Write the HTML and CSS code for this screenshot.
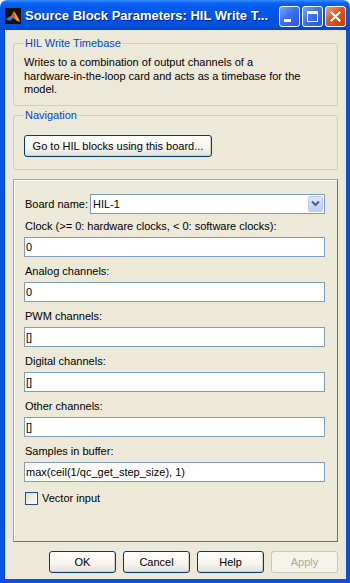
FILE: index.html
```html
<!DOCTYPE html>
<html lang="en">

<head>
    <meta charset="UTF-8">
    <meta name="viewport" content="width=device-width, initial-scale=1.0">
    <title>Source Block Parameters: HIL Write Timebase</title>
    <link rel="stylesheet" href="styles.css">
</head>

<body>

    <div class="window">
        <div class="titlebar">
            <svg class="app-icon" width="16" height="16" viewBox="0 0 16 16">
                <rect width="16" height="16" fill="#101010"/>
                <polygon points="1,11 6,8 9,3 12,8 15,14 11,12 8,10" fill="#e8591c"/>
                <polygon points="9,3 12,8 15,14 11,12" fill="#f7a132"/>
                <polygon points="1,11 6,8 8,10 5,13" fill="#2f7fd0"/>
            </svg>
            <span class="title">Source Block Parameters: HIL Write T...</span>
            <div class="caption-buttons">
                <span class="cap-btn"><span class="min-bar"></span></span>
                <span class="cap-btn"><span class="max-box"></span></span>
                <span class="cap-btn close">
                    <svg width="11" height="11" viewBox="0 0 11 11">
                        <path d="M1.5 1.5 L9.5 9.5 M9.5 1.5 L1.5 9.5" stroke="#fff" stroke-width="2.2" stroke-linecap="square"/>
                    </svg>
                </span>
            </div>
        </div>

        <div class="client">
            <fieldset class="group desc-group">
                <legend>HIL Write Timebase</legend>
                <p class="desc">Writes to a combination of output channels of a<br>hardware-in-the-loop card and acts as a timebase for the<br>model.</p>
            </fieldset>

            <fieldset class="group nav-group">
                <legend>Navigation</legend>
                <button class="btn nav-btn">Go to HIL blocks using this board...</button>
            </fieldset>

            <div class="params">
                <div class="board-row">
                    <span>Board name:</span>
                    <div class="select">
                        <span>HIL-1</span>
                        <span class="drop">
                            <svg width="9" height="7" viewBox="0 0 9 7">
                                <path d="M1 1.5 L4.5 5 L8 1.5" stroke="#4d6185" stroke-width="2" fill="none"/>
                            </svg>
                        </span>
                    </div>
                </div>

                <label class="field-label">Clock (&gt;= 0: hardware clocks, &lt; 0: software clocks):</label>
                <input class="field" type="text" value="0">

                <label class="field-label">Analog channels:</label>
                <input class="field" type="text" value="0">

                <label class="field-label">PWM channels:</label>
                <input class="field" type="text" value="[]">

                <label class="field-label">Digital channels:</label>
                <input class="field" type="text" value="[]">

                <label class="field-label">Other channels:</label>
                <input class="field" type="text" value="[]">

                <label class="field-label">Samples in buffer:</label>
                <input class="field" type="text" value="max(ceil(1/qc_get_step_size), 1)">

                <label class="check"><span class="box"></span>Vector input</label>
            </div>

            <div class="actions">
                <button class="btn">OK</button>
                <button class="btn">Cancel</button>
                <button class="btn">Help</button>
                <button class="btn" disabled>Apply</button>
            </div>
        </div>
    </div>

</body>

</html>
```

FILE: styles.css
```css
* {
    box-sizing: border-box;
    margin: 0;
    padding: 0;
}

body {
    width: 350px;
    height: 583px;
    overflow: hidden;
    background: #fff;
    font-family: "Liberation Sans", Arial, sans-serif;
    font-size: 11px;
    color: #000;
}

.window {
    width: 350px;
    height: 583px;
    display: flex;
    flex-direction: column;
}

.titlebar {
    height: 30px;
    flex: none;
    display: flex;
    align-items: center;
    padding: 0 4px 0 5px;
    border-radius: 7px 7px 0 0;
    background: linear-gradient(#3a8cff 0, #0a64f4 3px, #005aed 7px, #0054e3 18px, #0050d8 26px, #0046c4 30px);
}

.app-icon {
    flex: none;
    margin-top: 1px;
}

.title {
    flex: 1;
    margin-left: 4px;
    color: #fff;
    font-size: 13px;
    font-weight: bold;
    white-space: nowrap;
    text-shadow: 1px 1px 0 #0a1e8a;
}

.caption-buttons {
    display: flex;
    gap: 2px;
    margin-top: 2px;
}

.cap-btn {
    width: 21px;
    height: 21px;
    border: 1px solid #fff;
    border-radius: 3px;
    background: linear-gradient(135deg, #7aa7fa 0, #3d72ea 45%, #2457d8 100%);
    position: relative;
    display: flex;
    align-items: center;
    justify-content: center;
}

.cap-btn.close {
    background: linear-gradient(135deg, #f2a08a 0, #e1531f 45%, #c8380d 100%);
}

.min-bar {
    position: absolute;
    left: 4px;
    top: 12px;
    width: 7px;
    height: 3px;
    background: #fff;
}

.max-box {
    width: 11px;
    height: 11px;
    border: 1px solid #fff;
    border-top-width: 3px;
}

.client {
    flex: 1;
    display: flex;
    flex-direction: column;
    background: #ece9d8;
    border: 4px solid #0553e1;
    border-top: none;
    box-shadow: inset 1px 0 0 #0a45c8;
    padding: 0 8px 6px 9px;
}

.group {
    border: 1px solid #d0d0bf;
    border-radius: 3px;
    padding: 6px 10px 8px 10px;
    min-width: 0;
}

.group legend {
    color: #0046d5;
    padding: 0 1px;
    line-height: 13px;
}

.desc-group {
    margin-top: 7px;
}

.desc {
    line-height: 13.5px;
    white-space: nowrap;
}

.nav-group {
    margin-top: 3px;
    padding: 13px 10px 12px 10px;
}

.btn {
    font-family: inherit;
    font-size: 11px;
    color: #000;
    height: 22px;
    border: 1px solid #003c74;
    border-radius: 3px;
    background: linear-gradient(#ffffff 0, #f5f4ee 60%, #e3e1d6 100%);
    box-shadow: inset -1px -1px 0 #d6d0c5;
}

.nav-btn {
    width: 188px;
}

.btn:disabled {
    color: #aca899;
    border-color: #c9c7ba;
    background: #f5f4ea;
    box-shadow: none;
}

.params {
    flex: 1;
    margin-top: 9px;
    border: 1px solid;
    border-color: #a5a28f #716f64 #716f64 #a5a28f;
    box-shadow: inset 1px 1px 0 #fff;
    padding: 14px 12px 0 10px;
    display: flex;
    flex-direction: column;
}

.board-row {
    display: flex;
    align-items: center;
    justify-content: space-between;
    padding-left: 1px;
}

.select {
    width: 235px;
    height: 20px;
    border: 1px solid #7f9db9;
    background: #fff;
    display: flex;
    align-items: center;
    justify-content: space-between;
    padding: 0 1px 0 2px;
}

.drop {
    width: 15px;
    height: 16px;
    border-radius: 2px;
    border: 1px solid #b9ccf5;
    background: linear-gradient(#dbe6fd, #bccffa);
    display: flex;
    align-items: center;
    justify-content: center;
}

.field-label {
    line-height: 13px;
    margin-top: 6px;
    margin-bottom: 4px;
    padding-left: 1px;
}

.field {
    height: 20px;
    border: 1px solid #7f9db9;
    padding: 0 1px;
    font-family: inherit;
    font-size: 11px;
    color: #000;
    background: #fff;
    outline: none;
    margin-bottom: 2px;
}

.check {
    display: flex;
    align-items: center;
    gap: 4px;
    margin-top: 8px;
    padding-left: 1px;
    line-height: 13px;
}

.box {
    width: 13px;
    height: 13px;
    border: 1px solid #1c5180;
    background: linear-gradient(135deg, #dcdcd7, #fff);
}

.actions {
    display: flex;
    justify-content: flex-end;
    gap: 7px;
    margin-top: 9px;
}

.actions .btn {
    width: 67px;
}
```
